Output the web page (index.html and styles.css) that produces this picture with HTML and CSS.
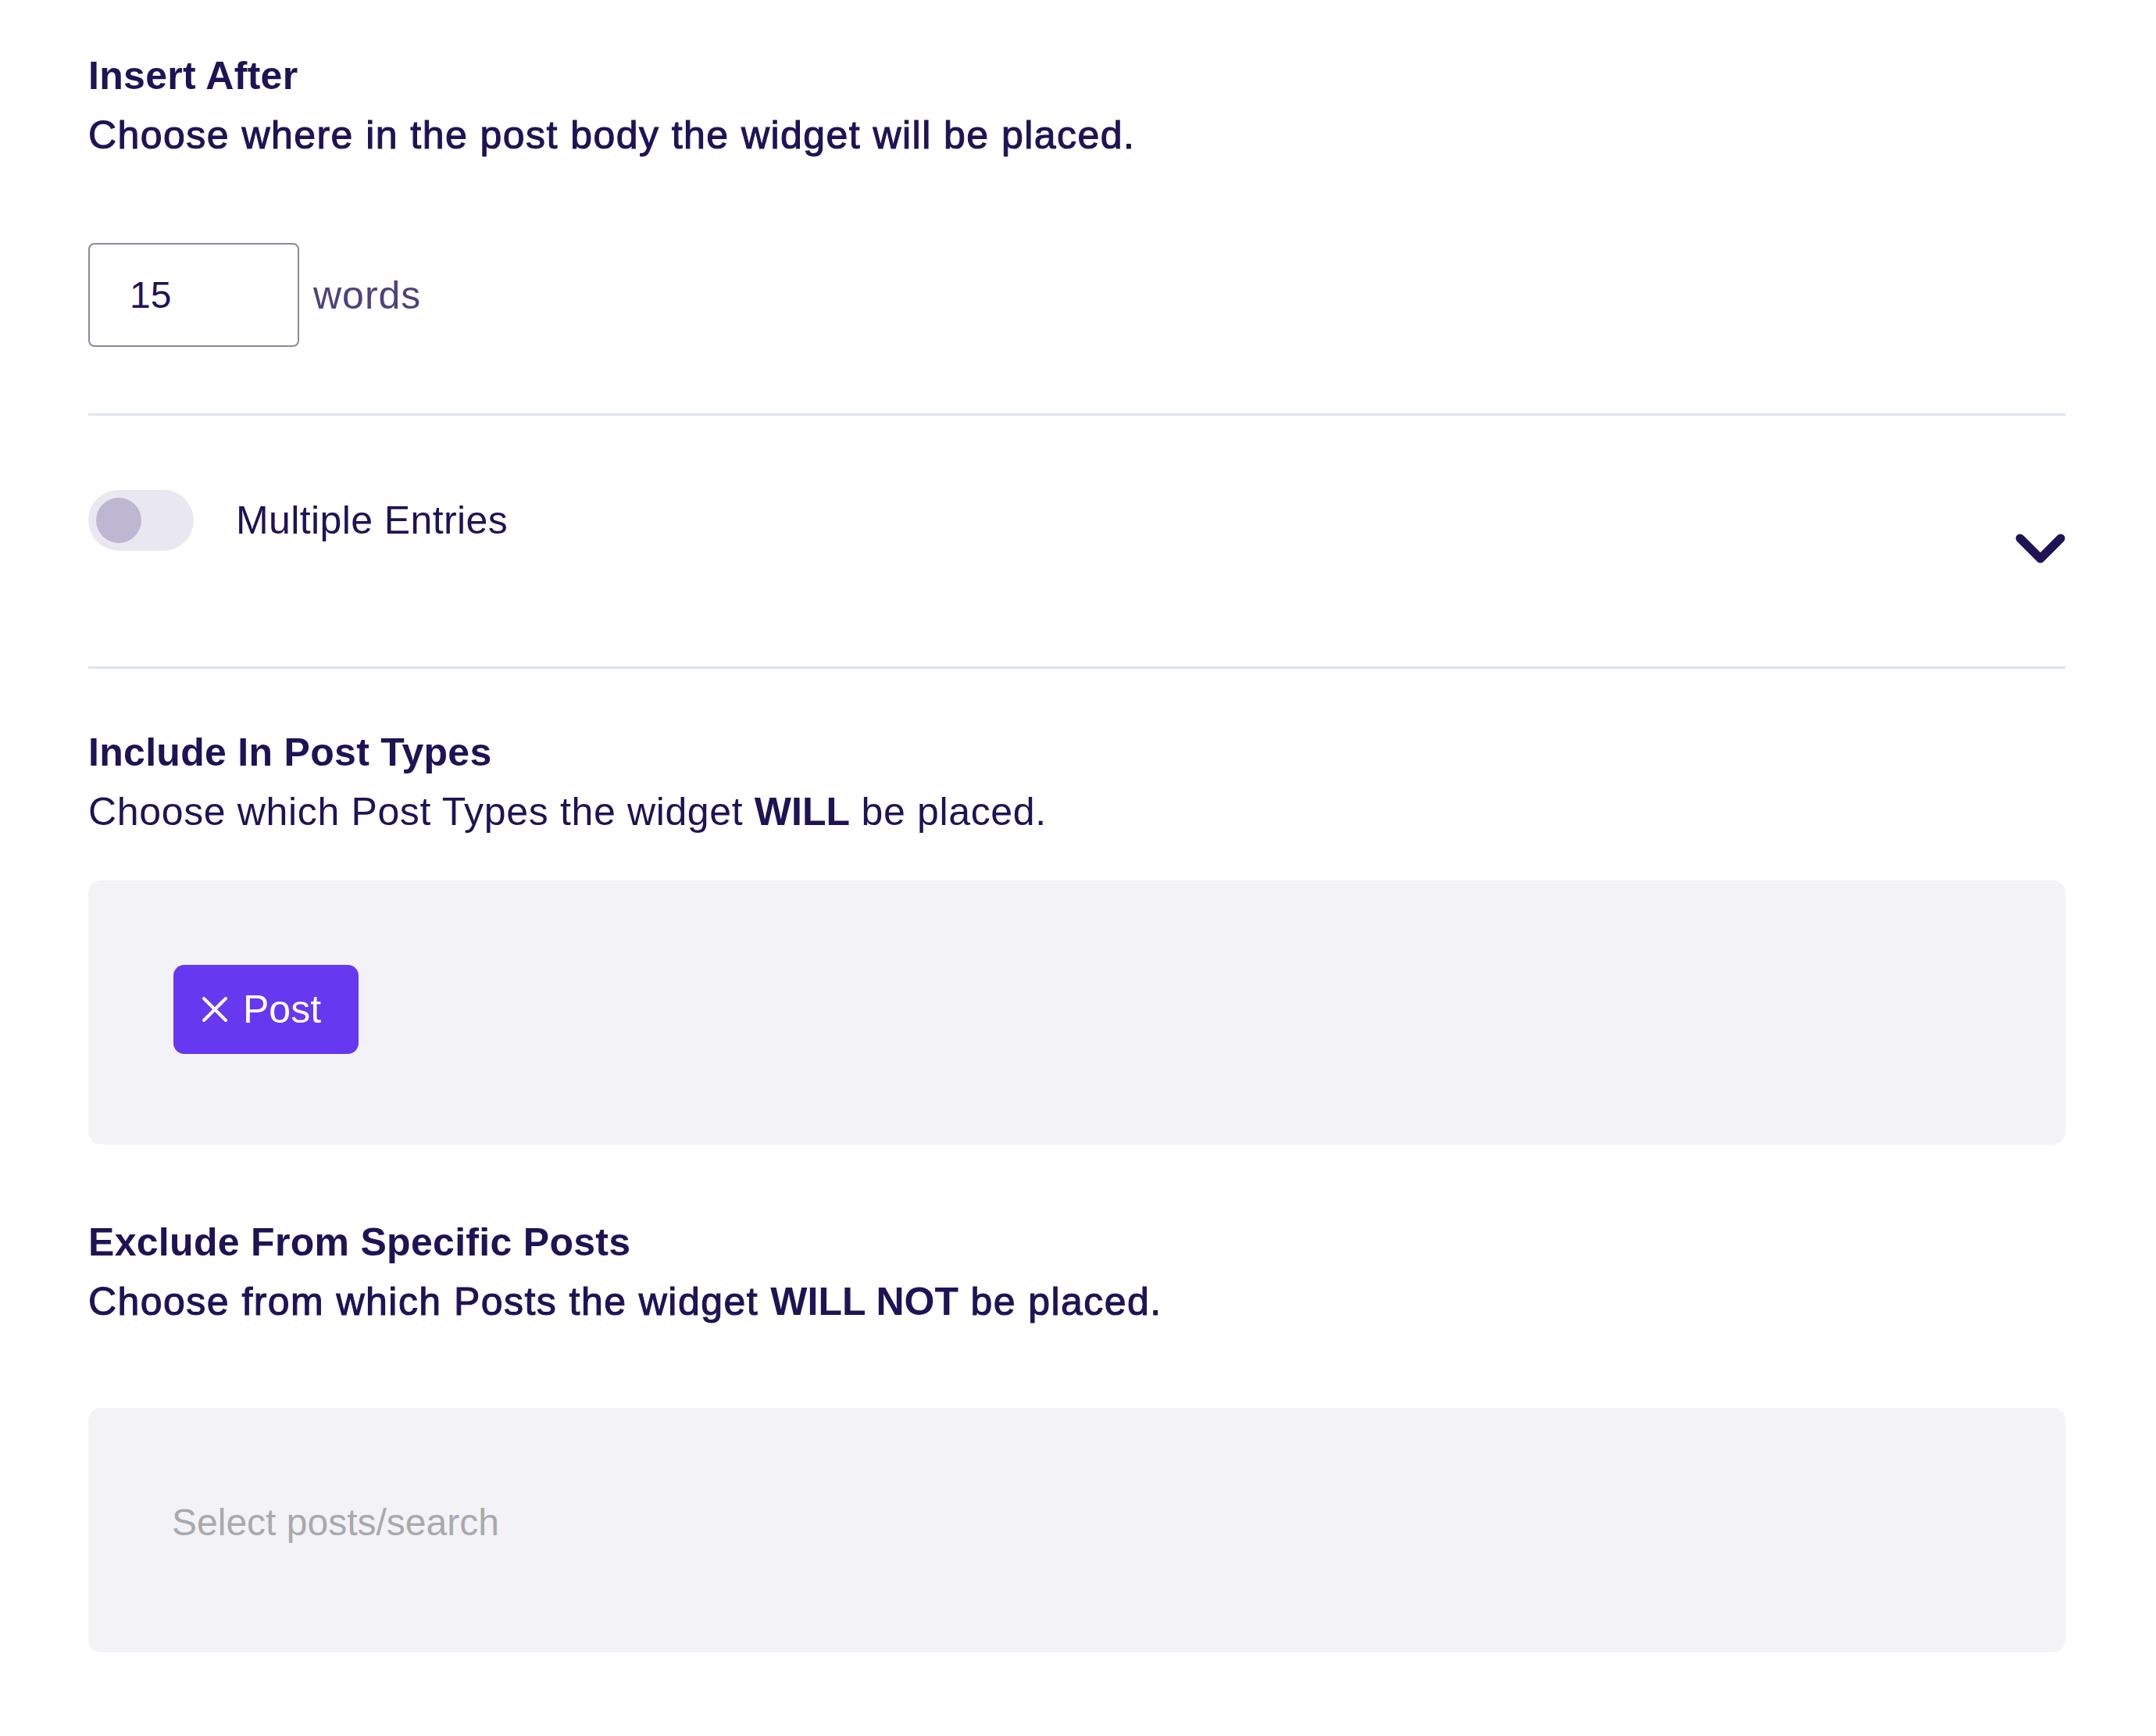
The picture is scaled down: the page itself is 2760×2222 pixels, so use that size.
FILE: index.html
```html
<!DOCTYPE html>
<html>
<head>
    <title>Widget Placement Settings</title>
    <link rel="stylesheet" href="styles.css">
</head>
<body>
    <div id="settings">
        <div class="field">
            <h3 class="field-title">Insert After</h3>
            <p class="field-desc medium">Choose where in the post body the widget will be placed.</p>
            <div class="words-row">
                <input class="num-input" type="text" value="15">
                <span class="unit">words</span>
            </div>
        </div>

        <div class="divider"></div>

        <div class="accordion">
            <div class="acc-head">
                <span class="toggle"><span class="knob"></span></span>
                <span class="acc-label">Multiple Entries</span>
            </div>
            <svg class="chevron" width="64" height="40" viewBox="0 0 64 40">
                <polyline points="6,6 32,32 58,6" fill="none" stroke="#1f1356" stroke-width="11" stroke-linecap="round" stroke-linejoin="round"/>
            </svg>
        </div>

        <div class="divider"></div>

        <div class="field include">
            <h3 class="field-title">Include In Post Types</h3>
            <p class="field-desc">Choose which Post Types the widget <strong>WILL</strong> be placed.</p>
            <div class="tag-box">
                <span class="tag">
                    <svg class="tag-x" width="34" height="34" viewBox="0 0 34 34">
                        <path d="M3 3 L31 31 M31 3 L3 31" stroke="#fff" stroke-width="4" stroke-linecap="round"/>
                    </svg>
                    Post
                </span>
            </div>
        </div>

        <div class="field exclude">
            <h3 class="field-title">Exclude From Specific Posts</h3>
            <p class="field-desc medium">Choose from which Posts the widget <strong>WILL NOT</strong> be placed.</p>
            <div class="select-box">
                <span class="placeholder">Select posts/search</span>
            </div>
        </div>
    </div>
</body>
</html>
```

FILE: styles.css
```css
body {
    margin: 0;
    padding: 0;
    background-color: #fff;
    font-family: "Liberation Sans", Arial, sans-serif;
    color: #1f1356;
}
#settings {
    padding: 59px 116px 0 113px;
}
.field-title {
    margin: 0;
    font-size: 50px;
    line-height: 76px;
    font-weight: 700;
    letter-spacing: 0.3px;
}
.field-desc {
    margin: 0;
    font-size: 50px;
    line-height: 76px;
    font-weight: 400;
    letter-spacing: 0.65px;
}
.field-desc.medium {
    letter-spacing: 1.45px;
    -webkit-text-stroke: 1.1px #1f1356;
}
.field-desc strong {
    font-weight: 700;
    letter-spacing: 0;
    -webkit-text-stroke: 0;
}
.words-row {
    display: flex;
    align-items: center;
    margin-top: 100px;
}
.num-input {
    box-sizing: border-box;
    width: 270px;
    height: 133px;
    padding: 0 0 0 51px;
    border: 2px solid #8c86ae;
    border-radius: 8px;
    font-family: "Liberation Sans", Arial, sans-serif;
    font-size: 48px;
    color: #1f1356;
    outline: none;
}
.unit {
    margin-left: 18px;
    font-size: 50px;
    letter-spacing: 1px;
    color: #4c437e;
}
.divider {
    height: 3px;
    background-color: #dce5f0;
}
.field:first-child + .divider {
    margin-top: 85px;
}
.accordion {
    display: flex;
    justify-content: space-between;
    align-items: flex-start;
    padding: 95px 0 130px;
}
.acc-head {
    display: flex;
    align-items: center;
}
.toggle {
    position: relative;
    width: 135px;
    height: 78px;
    border-radius: 39px;
    background-color: #e9e8f0;
}
.knob {
    position: absolute;
    left: 10px;
    top: 10px;
    width: 58px;
    height: 58px;
    border-radius: 50%;
    background-color: #bdb7d1;
}
.acc-label {
    margin-left: 54px;
    font-size: 50px;
    letter-spacing: 0.4px;
}
.chevron {
    display: block;
    margin-top: 56px;
}
.include {
    margin-top: 69px;
}
.tag-box {
    margin-top: 50px;
    padding: 108px 109px 116px;
    background-color: #f3f2f7;
    border-radius: 16px;
}
.tag {
    display: inline-flex;
    align-items: center;
    gap: 19px;
    box-sizing: border-box;
    height: 114px;
    padding: 0 48px 0 36px;
    background-color: #6638f0;
    border-radius: 14px;
    color: #fff;
    font-size: 50px;
}
.tag-x {
    display: block;
}
.exclude {
    margin-top: 87px;
}
.select-box {
    margin-top: 98px;
    padding: 109px 107px 117px;
    background-color: #f3f2f7;
    border-radius: 16px;
    line-height: 76px;
}
.placeholder {
    font-size: 48px;
    color: #a9a9ad;
}
```
